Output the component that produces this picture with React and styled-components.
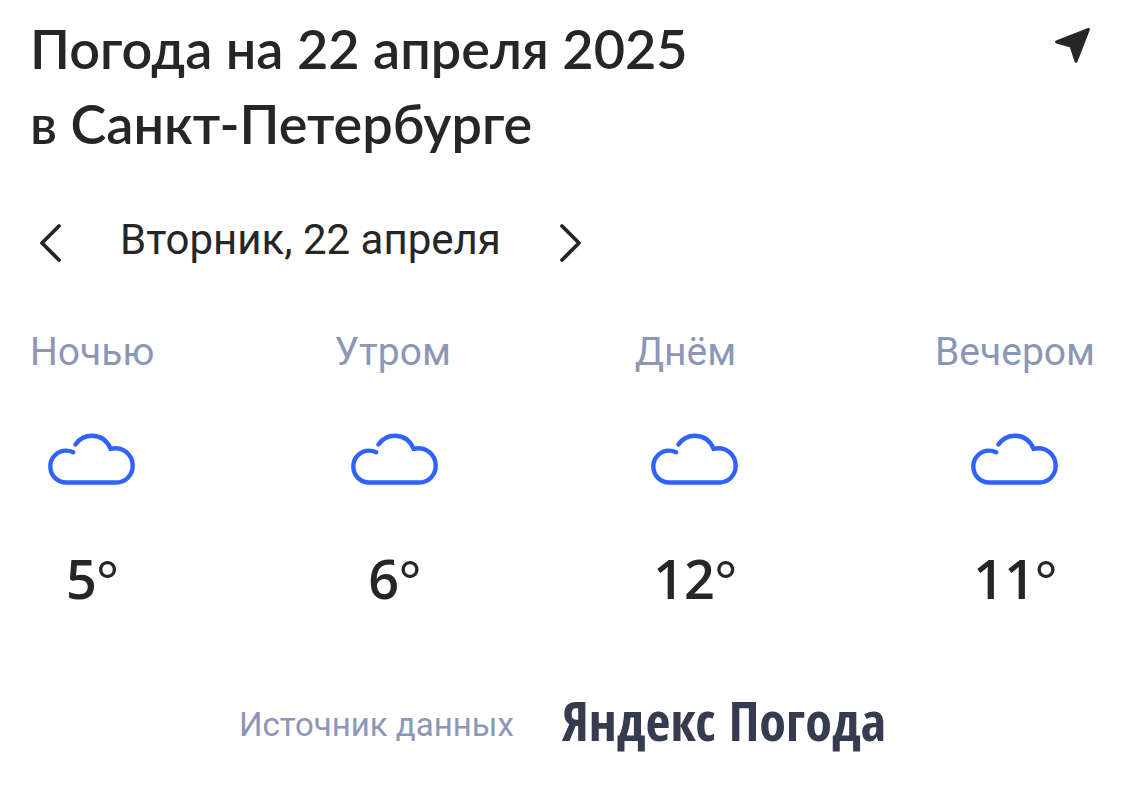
import React, { useState } from 'react'
import styled, { createGlobalStyle } from 'styled-components'

const MONTH_DAY = 22

const WEEKDAYS = [
  'Вторник',
  'Среда',
  'Четверг',
  'Пятница',
  'Суббота',
  'Воскресенье',
  'Понедельник',
]

const PARTS = [
  { name: 'Ночью', temp: 5 },
  { name: 'Утром', temp: 6 },
  { name: 'Днём', temp: 12 },
  { name: 'Вечером', temp: 11 },
]

const CloudIcon = () => (
  <svg width="88" height="52" viewBox="0 0 88 52" fill="none" aria-label="Облачно" role="img">
    <path
      d="M25.2 19.3C23 18.1 20.8 17.6 18 17.6C9.4 17.6 2.3 24.6 2.3 33.4C2.3 42.4 9.4 49.5 18.4 49.5H68.2C77.4 49.5 84.7 42.3 84.7 32.8C84.7 21.4 74.8 13.2 62.6 15.8C59 7.4 52.2 2.7 43.8 2.7C37 2.7 31.2 6 27.4 11.4"
      stroke="#2f62ff"
      strokeWidth="4.4"
      strokeLinecap="round"
    />
  </svg>
)

const LocationIcon = () => (
  <svg width="36" height="36" viewBox="0 0 36 36" aria-hidden="true">
    <path
      d="M33.4 2.4L1.6 15L16 19L21 34.4Z"
      fill="#262626"
      stroke="#262626"
      strokeWidth="3"
      strokeLinejoin="round"
    />
  </svg>
)

const ChevronIcon = ({ points }) => (
  <svg width="24" height="40" viewBox="0 0 24 40" fill="none" aria-hidden="true">
    <polyline
      points={points}
      stroke="#262626"
      strokeWidth="3.8"
      strokeLinecap="round"
      strokeLinejoin="round"
    />
  </svg>
)

const App = () => {
  const [offset, setOffset] = useState(0)
  const weekday = WEEKDAYS[((offset % 7) + 7) % 7]

  const move = (step) => {
    setOffset((prev) => Math.min(8, Math.max(-21, prev + step)))
  }

  return (
    <>
      <GlobalStyle />
      <Card>
        <Header>
          <Title>
            Погода на 22 апреля 2025
            <br />в Санкт-Петербурге
          </Title>
          <IconButton aria-label="Моё местоположение">
            <LocationIcon />
          </IconButton>
        </Header>
        <DateNav>
          <IconButton aria-label="Предыдущий день" onClick={() => move(-1)}>
            <ChevronIcon points="21,3 4,20 21,37" />
          </IconButton>
          <CurrentDate>
            {weekday}, {MONTH_DAY + offset} апреля
          </CurrentDate>
          <IconButton aria-label="Следующий день" onClick={() => move(1)}>
            <ChevronIcon points="3,3 20,20 3,37" />
          </IconButton>
        </DateNav>
        <Forecast>
          {PARTS.map((part) => (
            <Part key={part.name}>
              <PartName>{part.name}</PartName>
              <CloudIcon />
              <Temperature>
                {part.temp}
                <Degree>°</Degree>
              </Temperature>
            </Part>
          ))}
        </Forecast>
        <Footer>
          <Source>Источник данных</Source>
          <Brand href="#">Яндекс Погода</Brand>
        </Footer>
      </Card>
    </>
  )
}

const GlobalStyle = createGlobalStyle`
  body {
    margin: 0;
    background: #fff;
    color: #262626;
    font-family: Roboto, 'Liberation Sans', sans-serif;
  }
`

const Card = styled.main`
  padding: 11px 30px 32px;
`

const Header = styled.header`
  display: flex;
  justify-content: space-between;
  align-items: flex-start;
`

const Title = styled.h1`
  margin: 0;
  font-family: Lato, 'Open Sans', sans-serif;
  font-size: 54px;
  font-weight: 600;
  line-height: 75px;
`

const IconButton = styled.button`
  display: flex;
  padding: 16px 4px;
  border: none;
  background: none;
  cursor: pointer;
`

const DateNav = styled.nav`
  display: flex;
  align-items: center;
  gap: 54px;
  margin-top: 46px;
  padding-left: 4px;
`

const CurrentDate = styled.span`
  padding-bottom: 6px;
  font-size: 42px;
  line-height: 56px;
`

const Forecast = styled.section`
  display: flex;
  justify-content: space-between;
  margin-top: 49px;
`

const Part = styled.div`
  display: flex;
  flex-direction: column;
  align-items: center;
  min-width: 120px;
`

const PartName = styled.span`
  align-self: flex-start;
  margin-bottom: 57px;
  color: #8c97b8;
  font-size: 39px;
  line-height: 48px;
`

const Temperature = styled.span`
  margin-top: 55px;
  font-family: 'Open Sans', 'Noto Sans', sans-serif;
  font-size: 54px;
  font-weight: 600;
  line-height: 76px;
`

const Degree = styled.span`
  font-family: Lato, 'Open Sans', sans-serif;
  font-size: 52px;
  font-weight: 400;
`

const Footer = styled.footer`
  display: flex;
  justify-content: center;
  align-items: center;
  gap: 48px;
  margin-top: 71px;
`

const Source = styled.span`
  padding-top: 10px;
  color: #8c97b8;
  font-size: 33px;
  line-height: 40px;
`

const Brand = styled.a`
  color: #353c50;
  font-family: 'Open Sans Condensed', 'Roboto Condensed', 'Open Sans', sans-serif;
  font-size: 54px;
  font-weight: 700;
  line-height: 64px;
  text-decoration: none;
`

export default App
